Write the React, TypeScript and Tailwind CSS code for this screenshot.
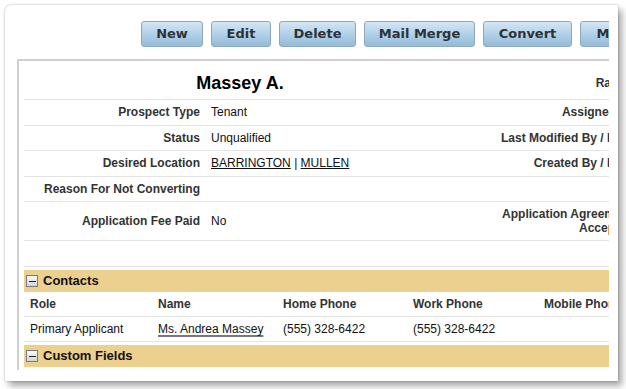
import React from "react";

const buttons = [
  { label: "New", w: "w-[62px]" },
  { label: "Edit", w: "w-[60px]" },
  { label: "Delete", w: "w-[77px]" },
  { label: "Mail Merge", w: "w-[111px]" },
  { label: "Convert", w: "w-[89px]" },
  { label: "More", w: "w-[70px]" },
];

type Row = {
  label: string;
  value?: React.ReactNode;
  rightLabel?: React.ReactNode;
  tall?: boolean;
};

const rows: Row[] = [
  { label: "Prospect Type", value: "Tenant", rightLabel: "Assigned To" },
  { label: "Status", value: "Unqualified", rightLabel: "Last Modified By / Date" },
  {
    label: "Desired Location",
    value: (
      <>
        <span className="underline">BARRINGTON</span> | <span className="underline">MULLEN</span>
      </>
    ),
    rightLabel: "Created By / Date",
  },
  { label: "Reason For Not Converting" },
  {
    label: "Application Fee Paid",
    value: "No",
    rightLabel: (
      <>
        Application Agreement
        <br />
        Accepted
      </>
    ),
    tall: true,
  },
];

const contactCols = ["Role", "Name", "Home Phone", "Work Phone", "Mobile Phone"];
const colWidths = ["w-[128px]", "w-[125px]", "w-[130px]", "w-[131px]", "w-[140px]"];

const MinusBox = () => (
  <span className="flex h-[12px] w-[12px] items-center justify-center border border-[#7a7a7a] bg-gradient-to-b from-[#fafafa] to-[#d4d4d4]">
    <span className="h-[1px] w-[7px] bg-[#222]" />
  </span>
);

const SectionBar = ({ title }: { title: string }) => (
  <div className="flex h-[22px] items-center gap-[5px] bg-[#ebd08f] pl-[2px] text-[13px] font-bold text-[#111]">
    <MinusBox />
    {title}
  </div>
);

const App = () => {
  return (
    <div className="h-[389px] w-[626px] overflow-hidden bg-white font-['Liberation_Sans',Arial,sans-serif]">
      <div className="ml-[5px] mt-[5px] h-[376px] w-[613px] rounded-tl-[6px] bg-white pr-[9px] shadow-[0_0_2px_rgba(0,0,0,0.35),4px_5px_7px_rgba(0,0,0,0.35)]">
        <div className="h-full w-full overflow-hidden">
          {/* toolbar */}
          <div className="flex w-[900px] gap-[8px] pl-[136px] pt-[16px]">
            {buttons.map((b) => (
              <button
                key={b.label}
                className={`${b.w} h-[26px] shrink-0 rounded-[3px] border border-[#8ea9bd] bg-gradient-to-b from-[#d3e6f4] to-[#93bbda] font-['DejaVu_Sans',sans-serif] text-[13px] font-bold text-[#2c3338]`}
              >
                {b.label}
              </button>
            ))}
          </div>

          {/* detail panel */}
          <div className="ml-[12px] mt-[12px] w-[900px] border-l-2 border-t-2 border-[#d0d0d0] pl-[5px] text-[12px] text-[#111]">
            <div className="flex h-[39px] items-center border-b border-[#e3e3e3] pt-[6px]">
              <div className="w-[432px] shrink-0 text-center text-[18px] font-bold text-black">Massey A.</div>
              <div className="w-[191px] shrink-0 pr-[14px] text-right font-bold text-[#333]">Rating</div>
            </div>
            {rows.map((r) => (
              <div
                key={r.label}
                className={`flex items-center border-b border-[#e3e3e3] ${r.tall ? "h-[39px]" : "h-[25.5px]"}`}
              >
                <div className="w-[187px] shrink-0 pr-[11px] text-right font-bold text-[#333]">{r.label}</div>
                <div className="w-[245px] shrink-0">{r.value}</div>
                <div className="w-[191px] shrink-0 pr-[14px] text-right font-bold leading-[14px] text-[#333]">
                  {r.rightLabel}
                </div>
              </div>
            ))}
            <div className="h-[26px] border-b border-[#e3e3e3]" />

            <div className="mt-[3px]">
              <SectionBar title="Contacts" />
            </div>
            <div className="flex h-[25px] items-center border-b border-[#e3e3e3] font-bold text-[#333]">
              {contactCols.map((c, i) => (
                <div key={c} className={`${colWidths[i]} shrink-0 pl-[6px]`}>
                  {c}
                </div>
              ))}
            </div>
            <div className="flex h-[25px] items-center border-b border-[#e3e3e3]">
              <div className={`${colWidths[0]} shrink-0 pl-[6px]`}>Primary Applicant</div>
              <div className={`${colWidths[1]} shrink-0 pl-[6px]`}>
                <span className="underline decoration-[#777] decoration-2 underline-offset-2">Ms. Andrea Massey</span>
              </div>
              <div className={`${colWidths[2]} shrink-0 pl-[6px]`}>(555) 328-6422</div>
              <div className={`${colWidths[3]} shrink-0 pl-[6px]`}>(555) 328-6422</div>
              <div className={`${colWidths[4]} shrink-0 pl-[6px]`} />
            </div>
            <div className="mt-[3px]">
              <SectionBar title="Custom Fields" />
            </div>
            <div className="h-[3px]" />
          </div>
        </div>
      </div>
    </div>
  );
};

export default App;
